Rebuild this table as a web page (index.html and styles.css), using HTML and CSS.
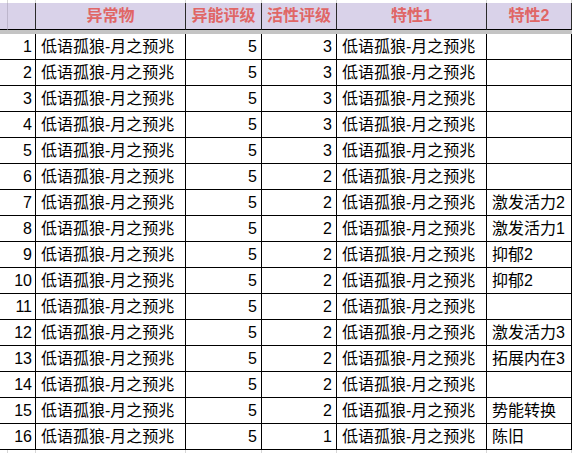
FILE: index.html
```html
<!DOCTYPE html>
<html lang="zh-CN">
<head>
<meta charset="utf-8">
<title>异常物</title>
<link rel="stylesheet" href="styles.css">
</head>
<body>
<div class="sheet">
  <div class="strip">
    <div class="g"></div><div class="g"></div><div class="g"></div><div class="g"></div><div class="g"></div><div class="g"></div><div class="g"></div><div class="g end"></div>
  </div>
  <div class="head">
    <div class="hc first"></div>
    <div class="hc"></div>
    <div class="hc">异常物</div>
    <div class="hc">异能评级</div>
    <div class="hc">活性评级</div>
    <div class="hc">特性1</div>
    <div class="hc">特性2</div>
    <div class="hc end"></div>
  </div>
  <div class="band"></div>
  <div class="rows" id="rows">
    <div class="row"><div class="c num">1</div><div class="c">低语孤狼-月之预兆</div><div class="c num">5</div><div class="c num">3</div><div class="c">低语孤狼-月之预兆</div><div class="c"></div><div class="c end"></div></div>
    <div class="row"><div class="c num">2</div><div class="c">低语孤狼-月之预兆</div><div class="c num">5</div><div class="c num">3</div><div class="c">低语孤狼-月之预兆</div><div class="c"></div><div class="c end"></div></div>
    <div class="row"><div class="c num">3</div><div class="c">低语孤狼-月之预兆</div><div class="c num">5</div><div class="c num">3</div><div class="c">低语孤狼-月之预兆</div><div class="c"></div><div class="c end"></div></div>
    <div class="row"><div class="c num">4</div><div class="c">低语孤狼-月之预兆</div><div class="c num">5</div><div class="c num">3</div><div class="c">低语孤狼-月之预兆</div><div class="c"></div><div class="c end"></div></div>
    <div class="row"><div class="c num">5</div><div class="c">低语孤狼-月之预兆</div><div class="c num">5</div><div class="c num">3</div><div class="c">低语孤狼-月之预兆</div><div class="c"></div><div class="c end"></div></div>
    <div class="row"><div class="c num">6</div><div class="c">低语孤狼-月之预兆</div><div class="c num">5</div><div class="c num">2</div><div class="c">低语孤狼-月之预兆</div><div class="c"></div><div class="c end"></div></div>
    <div class="row"><div class="c num">7</div><div class="c">低语孤狼-月之预兆</div><div class="c num">5</div><div class="c num">2</div><div class="c">低语孤狼-月之预兆</div><div class="c">激发活力2</div><div class="c end"></div></div>
    <div class="row"><div class="c num">8</div><div class="c">低语孤狼-月之预兆</div><div class="c num">5</div><div class="c num">2</div><div class="c">低语孤狼-月之预兆</div><div class="c">激发活力1</div><div class="c end"></div></div>
    <div class="row"><div class="c num">9</div><div class="c">低语孤狼-月之预兆</div><div class="c num">5</div><div class="c num">2</div><div class="c">低语孤狼-月之预兆</div><div class="c">抑郁2</div><div class="c end"></div></div>
    <div class="row"><div class="c num">10</div><div class="c">低语孤狼-月之预兆</div><div class="c num">5</div><div class="c num">2</div><div class="c">低语孤狼-月之预兆</div><div class="c">抑郁2</div><div class="c end"></div></div>
    <div class="row"><div class="c num">11</div><div class="c">低语孤狼-月之预兆</div><div class="c num">5</div><div class="c num">2</div><div class="c">低语孤狼-月之预兆</div><div class="c"></div><div class="c end"></div></div>
    <div class="row"><div class="c num">12</div><div class="c">低语孤狼-月之预兆</div><div class="c num">5</div><div class="c num">2</div><div class="c">低语孤狼-月之预兆</div><div class="c">激发活力3</div><div class="c end"></div></div>
    <div class="row"><div class="c num">13</div><div class="c">低语孤狼-月之预兆</div><div class="c num">5</div><div class="c num">2</div><div class="c">低语孤狼-月之预兆</div><div class="c">拓展内在3</div><div class="c end"></div></div>
    <div class="row"><div class="c num">14</div><div class="c">低语孤狼-月之预兆</div><div class="c num">5</div><div class="c num">2</div><div class="c">低语孤狼-月之预兆</div><div class="c"></div><div class="c end"></div></div>
    <div class="row"><div class="c num">15</div><div class="c">低语孤狼-月之预兆</div><div class="c num">5</div><div class="c num">2</div><div class="c">低语孤狼-月之预兆</div><div class="c">势能转换</div><div class="c end"></div></div>
    <div class="row"><div class="c num">16</div><div class="c">低语孤狼-月之预兆</div><div class="c num">5</div><div class="c num">1</div><div class="c">低语孤狼-月之预兆</div><div class="c">陈旧</div><div class="c end"></div></div>
  </div>
  <div class="strip">
    <div class="g"></div><div class="g"></div><div class="g"></div><div class="g"></div><div class="g"></div><div class="g"></div><div class="g"></div><div class="g end"></div>
  </div>
</div>
</body>
</html>
```

FILE: styles.css
```css
html, body {
  margin: 0;
  padding: 0;
  background: #ffffff;
}
body {
  width: 576px;
  height: 454px;
  overflow: hidden;
  font-family: "Liberation Sans", "Noto Sans CJK SC", sans-serif;
  font-size: 16px;
  color: #000000;
}
.sheet {
  display: flex;
  flex-direction: column;
  width: 576px;
}
.strip {
  display: grid;
  grid-template-columns: 8px 28px 150px 76px 75px 150px 85px 4px;
  height: 3px;
}
.g {
  border-right: 1px solid #d6d6d6;
}
.g.end {
  border-right: none;
}
.head {
  display: grid;
  grid-template-columns: 8px 28px 150px 76px 75px 150px 85px 4px;
  height: 27px;
}
.hc {
  background: #d9d2e9;
  border-right: 1px solid #2a2a2a;
  border-bottom: 1px solid #000000;
  color: #e06666;
  font-weight: bold;
  text-align: center;
  line-height: 26px;
  white-space: nowrap;
  overflow: hidden;
}
.hc.first {
  border-right: 1px solid #bdb6cc;
}
.hc.end {
  background: #ffffff;
  border-right: none;
  border-bottom: none;
}
.band {
  height: 4px;
  background: #c4c4c4;
  width: 572px;
}
.rows {
  display: flex;
  flex-direction: column;
}
.row {
  display: grid;
  grid-template-columns: 36px 150px 76px 75px 150px 85px 4px;
  height: 26px;
}
.c {
  border-right: 1px solid #000000;
  border-bottom: 1px solid #000000;
  line-height: 25px;
  padding: 0 4px 0 5px;
  white-space: nowrap;
  overflow: hidden;
}
.c.num {
  text-align: right;
  padding: 0 4px 0 2px;
}
.row .c:first-child.num {
  padding-right: 3px;
}
.c.end {
  border: none;
  padding: 0;
}
```
